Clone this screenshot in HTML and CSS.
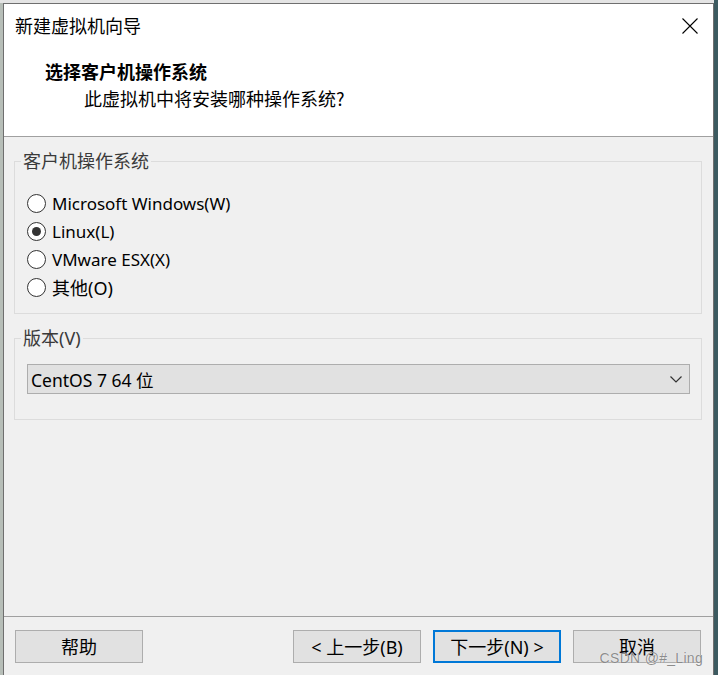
FILE: index.html
```html
<!DOCTYPE html>
<html lang="zh-CN">
<head>
<meta charset="utf-8">
<title>新建虚拟机向导</title>
<link rel="stylesheet" href="styles.css">
</head>
<body>
<div class="window">
  <div class="titlebar">
    <span class="title">新建虚拟机向导</span>
    <svg class="close" width="16" height="16" viewBox="0 0 16 16"><path d="M0.5 0.5 L15.5 15.5 M15.5 0.5 L0.5 15.5" stroke="#000" stroke-width="1.1" fill="none"/></svg>
  </div>
  <div class="header">
    <div class="h-title">选择客户机操作系统</div>
    <div class="h-sub">此虚拟机中将安装哪种操作系统?</div>
  </div>
  <div class="content">
    <fieldset class="group group-os">
      <legend>客户机操作系统</legend>
      <div class="radios">
        <div class="radio"><span class="circle"></span><span>Microsoft Windows(W)</span></div>
        <div class="radio checked"><span class="circle"></span><span>Linux(L)</span></div>
        <div class="radio"><span class="circle"></span><span>VMware ESX(X)</span></div>
        <div class="radio"><span class="circle"></span><span class="cjk-label">其他(O)</span></div>
      </div>
    </fieldset>
    <fieldset class="group group-ver">
      <legend>版本(V)</legend>
      <div class="select">
        <span>CentOS 7 64 位</span>
        <svg class="chev" width="12" height="7" viewBox="0 0 12 7"><path d="M0.5 0.5 L6 6 L11.5 0.5" stroke="#333" stroke-width="1.2" fill="none"/></svg>
      </div>
    </fieldset>
  </div>
  <div class="footer">
    <div class="btn">帮助</div>
    <div class="spacer"></div>
    <div class="btn">&lt; 上一步(B)</div>
    <div class="btn primary">下一步(N) &gt;</div>
    <div class="btn">取消</div>
  </div>
  <div class="watermark">CSDN @#_Ling</div>
</div>
</body>
</html>
```
FILE: styles.css
```css
html, body {
  margin: 0;
  height: 100%;
  overflow: hidden;
}
body {
  background:
    linear-gradient(to right, transparent 0 714px, #3c5a60 714px),
    linear-gradient(to bottom, #e4e4e4 0 3px, #b7beb8 3px);
  font-family: "Noto Sans", "Noto Sans CJK SC", sans-serif;
  font-size: 18px;
  color: #000;
}
.window {
  position: relative;
  margin: 3px 0 0 3px;
  width: 709px;
  height: 675px;
  border: 1px solid #6f6f6f;
  background: #f0f0f0;
  display: flex;
  flex-direction: column;
}
.titlebar {
  height: 42px;
  background: #fff;
  display: flex;
  align-items: center;
  justify-content: space-between;
  padding: 0 15px 0 11px;
}
.title {
  font-family: "Noto Sans CJK SC", sans-serif;
  font-size: 18px;
  line-height: 24px;
}
.close {
  display: block;
  margin-top: 1px;
}
.header {
  background: #fff;
  padding: 13px 0 26px 41px;
  border-bottom: 1px solid #a0a0a0;
}
.h-title {
  font-family: "Noto Sans CJK SC", sans-serif;
  font-weight: bold;
  font-size: 18px;
  line-height: 24px;
}
.h-sub {
  font-family: "Noto Sans CJK SC", sans-serif;
  font-size: 18px;
  line-height: 24px;
  margin: 3px 0 0 39px;
}
.content {
  flex: 1;
  padding: 12px 11px 0 10px;
}
.group {
  margin: 0;
  padding: 0;
  border: 1px solid #dcdcdc;
  min-width: 0;
}
.group legend {
  margin-left: 6px;
  padding: 0 2px;
  line-height: 24px;
  color: #3a3a3a;
}
.group-ver {
  margin-top: 12px;
}
.radios {
  padding: 16px 0 12px 12px;
}
.radio {
  height: 28px;
  display: flex;
  align-items: center;
  gap: 6px;
  font-size: 17px;
}
.cjk-label {
  font-size: 18px;
}
.circle {
  width: 17px;
  height: 17px;
  border: 1px solid #333;
  border-radius: 50%;
  background: #fff;
  display: flex;
  align-items: center;
  justify-content: center;
}
.radio.checked .circle::after {
  content: "";
  width: 9px;
  height: 9px;
  border-radius: 50%;
  background: #333;
}
.select {
  margin: 14px 11px 25px 12px;
  height: 28px;
  border: 1px solid #adadad;
  background: #e1e1e1;
  display: flex;
  align-items: center;
  justify-content: space-between;
  padding: 0 7px 0 3px;
  font-size: 17.5px;
}
.chev {
  display: block;
}
.footer {
  border-top: 1px solid #a0a0a0;
  padding: 13px 12px 16px 11px;
  display: flex;
  gap: 12px;
}
.spacer {
  flex: 1;
}
.btn {
  width: 126px;
  height: 31px;
  border: 1px solid #adadad;
  background: #e1e1e1;
  display: flex;
  align-items: center;
  justify-content: center;
  line-height: 24px;
}
.btn.primary {
  width: 124px;
  height: 29px;
  border: 2px solid #0078d7;
}
.watermark {
  position: absolute;
  right: 10px;
  top: 646px;
  font-family: "Liberation Sans", Arial, sans-serif;
  font-size: 14px;
  color: rgba(120, 120, 120, 0.85);
  text-shadow: 0 0 1px #fff;
  letter-spacing: 0.3px;
}
```
